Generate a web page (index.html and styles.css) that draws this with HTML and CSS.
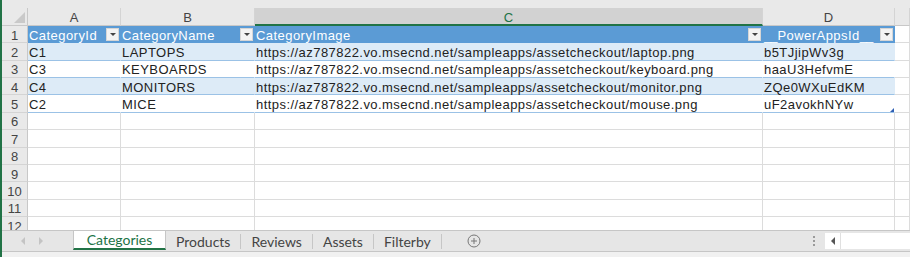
FILE: index.html
```html
<!DOCTYPE html>
<html lang="ja">
<head>
    <meta charset="utf-8" />
    <title>Categories</title>
    <link rel="stylesheet" href="styles.css">
</head>
<body>
    <div class="app">
        <div class="sheet">
            <div class="strip"></div>
            <div class="grid">
                <div class="corner"><span class="corner-tri"></span></div>
                <div class="colhead">A</div>
                <div class="colhead">B</div>
                <div class="colhead selected">C</div>
                <div class="colhead">D</div>
                <div class="colhead"></div>

                <div class="rownum">1</div>
                <div class="cell th">CategoryId<span class="dd"></span></div>
                <div class="cell th">CategoryName<span class="dd"></span></div>
                <div class="cell th">CategoryImage<span class="dd"></span></div>
                <div class="cell th"><span class="uscore">__</span>PowerAppsId<span class="uscore">__</span><span class="dd"></span></div>
                <div class="cell"></div>

                <div class="rownum">2</div>
                <div class="cell band">C1</div>
                <div class="cell band">LAPTOPS</div>
                <div class="cell band">https://az787822.vo.msecnd.net/sampleapps/assetcheckout/laptop.png</div>
                <div class="cell band">b5TJjipWv3g</div>
                <div class="cell"></div>

                <div class="rownum">3</div>
                <div class="cell plain">C3</div>
                <div class="cell plain">KEYBOARDS</div>
                <div class="cell plain">https://az787822.vo.msecnd.net/sampleapps/assetcheckout/keyboard.png</div>
                <div class="cell plain">haaU3HefvmE</div>
                <div class="cell"></div>

                <div class="rownum">4</div>
                <div class="cell band">C4</div>
                <div class="cell band">MONITORS</div>
                <div class="cell band">https://az787822.vo.msecnd.net/sampleapps/assetcheckout/monitor.png</div>
                <div class="cell band">ZQe0WXuEdKM</div>
                <div class="cell"></div>

                <div class="rownum">5</div>
                <div class="cell plain">C2</div>
                <div class="cell plain">MICE</div>
                <div class="cell plain">https://az787822.vo.msecnd.net/sampleapps/assetcheckout/mouse.png</div>
                <div class="cell plain last">uF2avokhNYw</div>
                <div class="cell"></div>

                <div class="rownum">6</div><div class="cell"></div><div class="cell"></div><div class="cell"></div><div class="cell"></div><div class="cell"></div>
                <div class="rownum">7</div><div class="cell"></div><div class="cell"></div><div class="cell"></div><div class="cell"></div><div class="cell"></div>
                <div class="rownum">8</div><div class="cell"></div><div class="cell"></div><div class="cell"></div><div class="cell"></div><div class="cell"></div>
                <div class="rownum">9</div><div class="cell"></div><div class="cell"></div><div class="cell"></div><div class="cell"></div><div class="cell"></div>
                <div class="rownum">10</div><div class="cell"></div><div class="cell"></div><div class="cell"></div><div class="cell"></div><div class="cell"></div>
                <div class="rownum">11</div><div class="cell"></div><div class="cell"></div><div class="cell"></div><div class="cell"></div><div class="cell"></div>
                <div class="rownum">12</div><div class="cell"></div><div class="cell"></div><div class="cell"></div><div class="cell"></div><div class="cell"></div>
            </div>
        </div>

        <div class="tabbar">
            <div class="nav">
                <span class="nav-arrow left"></span>
                <span class="nav-arrow right"></span>
            </div>
            <div class="tab active">Categories</div>
            <div class="tab">Products</div>
            <div class="tab">Reviews</div>
            <div class="tab">Assets</div>
            <div class="tab">Filterby</div>
            <div class="add">
                <svg width="14" height="14" viewBox="0 0 14 14">
                    <circle cx="7" cy="7" r="6" fill="none" stroke="#777" stroke-width="1" />
                    <path d="M7 4v6M4 7h6" stroke="#777" stroke-width="1" />
                </svg>
            </div>
            <div class="scroll-area">
                <div class="grip"><i></i><i></i><i></i></div>
                <div class="hscroll">
                    <div class="hscroll-btn"><span class="tri-left"></span></div>
                    <div class="hscroll-track"></div>
                </div>
            </div>
        </div>
        <div class="status"></div>
    </div>
</body>
</html>
```

FILE: styles.css
```css
html, body {
    margin: 0;
    padding: 0;
    background: #ffffff;
}

.app {
    width: 910px;
    height: 257px;
    display: flex;
    flex-direction: column;
    border-left: 2px solid #217346;
    box-sizing: border-box;
    overflow: hidden;
}

.sheet {
    height: 230px;
    overflow: hidden;
}

.strip {
    height: 8px;
    background: #e9e9e9;
}

.grid {
    display: grid;
    grid-template-columns: 26px 93px 134px 508px 132px 1fr;
    grid-template-rows: 18px;
    grid-auto-rows: 17.36px;
    font-family: "Liberation Sans", "Noto Sans CJK JP", sans-serif;
    font-size: 13px;
    letter-spacing: 0.45px;
    color: #222;
}

.corner {
    background: #e9e9e9;
    border-right: 1px solid #c8c8c8;
    border-bottom: 1px solid #c8c8c8;
    display: flex;
    justify-content: flex-end;
    align-items: flex-end;
    padding: 0 2px 2px 0;
}

.corner-tri {
    width: 0;
    height: 0;
    border-left: 11px solid transparent;
    border-bottom: 11px solid #c9c9c9;
}

.colhead {
    background: #e9e9e9;
    border-right: 1px solid #d4d4d4;
    border-bottom: 1px solid #c8c8c8;
    display: flex;
    align-items: center;
    justify-content: center;
    color: #444;
    letter-spacing: 0;
    padding-top: 2px;
    box-sizing: border-box;
}

.colhead.selected {
    background: #d2d2d2;
    color: #217346;
    border-bottom: 2px solid #217346;
}

.rownum {
    background: #e9e9e9;
    border-right: 1px solid #c8c8c8;
    border-bottom: 1px solid #d4d4d4;
    display: flex;
    align-items: center;
    justify-content: center;
    color: #444;
    letter-spacing: 0;
    padding-top: 2px;
    box-sizing: border-box;
}

.cell {
    border-right: 1px solid #dcdcdc;
    border-bottom: 1px solid #dcdcdc;
    display: flex;
    align-items: center;
    padding: 2px 0 0 1px;
    box-sizing: border-box;
    white-space: nowrap;
    position: relative;
}

.cell.th {
    background: #5b9bd5;
    border-color: #5b9bd5;
    color: #ffffff;
}

.uscore {
    letter-spacing: -1px;
    margin-right: 1px;
}

.cell.band {
    background: #ddebf7;
    border-right-color: #ddebf7;
    border-bottom-color: #9bc2e6;
}

.cell.plain {
    background: #ffffff;
    border-right-color: #ffffff;
    border-bottom-color: #9bc2e6;
}

.cell.last::after {
    content: "";
    position: absolute;
    right: 0;
    bottom: 0;
    width: 0;
    height: 0;
    border-left: 4px solid transparent;
    border-bottom: 4px solid #2f5fb3;
}

.dd {
    margin-left: auto;
    margin-right: 1px;
    margin-top: -2px;
    width: 13px;
    height: 13px;
    box-sizing: border-box;
    background: #f3f3f3;
    border: 1px solid #d6d6d6;
    display: flex;
    align-items: center;
    justify-content: center;
}

.dd::before {
    content: "";
    width: 0;
    height: 0;
    border-left: 3px solid transparent;
    border-right: 3px solid transparent;
    border-top: 3px solid #444;
}

/* sheet tabs */
.tabbar {
    height: 21px;
    background: #e6e6e6;
    border-top: 1px solid #c6c6c6;
    box-sizing: border-box;
    display: flex;
    align-items: stretch;
    font-family: "Lato", "Noto Sans", sans-serif;
    font-size: 14px;
    color: #444;
}

.nav {
    width: 71px;
    display: flex;
    align-items: center;
    padding-left: 19px;
    gap: 14px;
    box-sizing: border-box;
}

.nav-arrow {
    width: 0;
    height: 0;
    border-top: 4px solid transparent;
    border-bottom: 4px solid transparent;
}

.nav-arrow.left {
    border-right: 4px solid #c4c4c4;
}

.nav-arrow.right {
    border-left: 4px solid #c4c4c4;
}

.tab {
    display: flex;
    align-items: center;
    padding: 0 10px;
    margin: 3px 0 2px;
    border-right: 1px solid #c6c6c6;
}

.tab.active {
    background: #ffffff;
    color: #217346;
    margin: 0 0 1px;
    padding: 0 11px 0 11px;
    width: 93px;
    box-sizing: border-box;
    justify-content: center;
    border-left: 1px solid #c6c6c6;
    border-right: 1px solid #c6c6c6;
    border-bottom: 2px solid #217346;
}

.add {
    display: flex;
    align-items: center;
    padding-left: 25px;
}

.scroll-area {
    margin-left: auto;
    display: flex;
    align-items: center;
}

.grip {
    display: flex;
    flex-direction: column;
    gap: 2px;
    margin-right: 10px;
}

.grip i {
    width: 2px;
    height: 2px;
    background: #9a9a9a;
}

.hscroll {
    width: 85px;
    height: 16px;
    background: #ffffff;
    display: flex;
}

.hscroll-btn {
    width: 15px;
    border-right: 1px solid #e0e0e0;
    display: flex;
    align-items: center;
    justify-content: center;
}

.tri-left {
    width: 0;
    height: 0;
    border-top: 4px solid transparent;
    border-bottom: 4px solid transparent;
    border-right: 4px solid #555;
}

.hscroll-track {
    flex: 1;
}

.status {
    flex: 1;
    background: #f1f1f1;
    border-top: 1px solid #c6c6c6;
}
```
